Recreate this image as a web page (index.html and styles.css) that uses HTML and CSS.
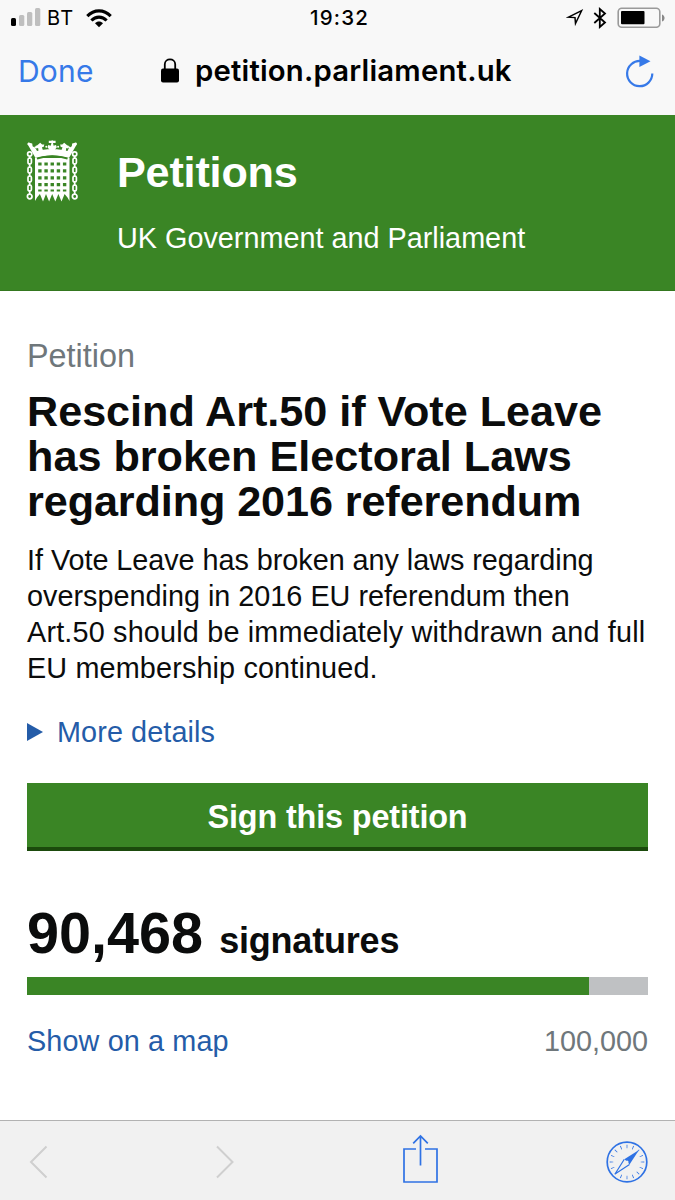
FILE: index.html
```html
<!DOCTYPE html>
<html lang="en">
<head>
<meta charset="utf-8">
<title>Petitions</title>
<link rel="stylesheet" href="styles.css">
</head>
<body>
<div class="screen">
  <div class="browser-top">
    <div class="status">
      <div class="status-left">
        <svg class="signal" width="32" height="20" viewBox="0 0 32 20"><rect x="1" y="10" width="5" height="8" rx="1.5" fill="#000"/><g fill="#bfbfbf"><rect x="9" y="7" width="5.3" height="11" rx="1.5"/><rect x="17" y="4" width="5.3" height="14" rx="1.5"/><rect x="25" y="0" width="5.3" height="18" rx="1.5"/></g></svg>
        <span class="carrier">BT</span>
        <svg class="wifi" width="26" height="19" viewBox="0 0 26 19" fill="none" stroke="#000" stroke-width="3.1"><path d="M1.3 7.1C8 .1 18 .1 24.7 7.1"/><path d="M5.4 11.5c4.4-4.5 10.8-4.5 15.2 0"/><path d="M13 18.3l-4-4c2.3-2.4 5.700-2.400 8 0z" fill="#000" stroke="none"/></svg>
      </div>
      <span class="clock">19:32</span>
      <div class="status-right">
        <svg width="18" height="18" viewBox="0 0 18 18" fill="none" stroke="#000" stroke-width="1.5"><path d="M2.500 8.200L15.600 1.700 9.500 14.500 9 8.600z"/></svg>
        <svg class="bt" width="14" height="22" viewBox="0 0 14 22" fill="none" stroke="#000" stroke-width="1.8"><path d="M1.300 6L12 15.500 6.800 20V2L12 6.500 1.300 16"/></svg>
        <svg class="battery" width="49" height="22" viewBox="0 0 49 22"><rect x="1.200" y="1.200" width="41.600" height="19" rx="3.500" fill="none" stroke="#9a9a9a" stroke-width="1.600"/><rect x="4" y="4" width="23.500" height="13.200" rx="1" fill="#000"/><path d="M45 7.400c3.400 1 3.400 6 0 7z" fill="#888"/></svg>
      </div>
    </div>
    <div class="address">
      <span class="done">Done</span>
      <svg class="lock" width="20" height="26" viewBox="0 0 20 26"><rect x="1" y="10.400" width="18" height="14.200" rx="2" fill="#000"/><path d="M4.800 12V6.200C4.800-.2 15.200-.2 15.200 6.200V12" fill="none" stroke="#000" stroke-width="1.800"/></svg>
      <span class="url">petition.parliament.uk</span>
      <svg class="reload" width="30" height="34" viewBox="0 0 30 34"><path d="M15.500 7A12.600 12.600 0 1 0 27.300 19.600" fill="none" stroke="#3679e8" stroke-width="2.200"/><path d="M14.400 1.500L25.500 7.200 14.400 13z" fill="#3679e8"/></svg>
    </div>
  </div>
  <header class="banner">
    <svg class="crest" width="54" height="64" viewBox="0 0 54 64">
      <g fill="none" stroke="#fff" stroke-width="1.700">
        <g id="chain"><circle cx="3.700" cy="14" r="2.100"/><rect x="2" y="18" width="3.400" height="6" rx="1.600"/><rect x="2" y="27" width="3.400" height="6" rx="1.600"/><rect x="2" y="36" width="3.400" height="6" rx="1.600"/><rect x="2" y="45" width="3.400" height="6" rx="1.600"/><path d="M3.700 16v3M3.700 23v5M3.700 32v5M3.700 41v5M3.700 50v4"/><circle cx="3.700" cy="56.500" r="2.300"/></g>
        <use href="#chain" x="45"/>
      </g>
      <path d="M9 18H43.500V61L41.500 57.500 38.600 54 35.500 61.500 32.400 54 29.300 61.500 26.200 54 23.100 61.500 20 54 17 61.500 13.900 54 11 57.500 9 61z" fill="#fff"/>
      <g stroke="#3a8525" stroke-width="3.200" stroke-dasharray="3.400 2.780" fill="none">
        <path d="M12.200 24H41M12.200 30.900H41M12.200 37.800H41M12.200 44.700H41"/>
        <path d="M12.200 50.500H41" stroke-width="2"/>
      </g>
      <path d="M9.500 18L2.300 5.500C0 4 2.500 1.200 4.200 3L6.200 3.500 6.600 6.200C9 7.500 10.400 9.200 11 11 17 8.600 35.500 8.600 41.500 11 42 9.200 43.400 7.500 45.800 6.200L46.200 3.500 48.200 3C50 1.200 52.400 4 50.100 5.500L43 18C35 14.500 17.500 14.500 9.500 18z" fill="#fff"/>
      <path d="M11 18.700C20 15.200 32.500 15.200 41.500 18.700" fill="none" stroke="#3a8525" stroke-width="1.600"/>
      <g fill="#fff">
        <path d="M25.500 3.100H22.800V.8h2.300L26.200.2l1.100.6h2.300v2.300H27l.6 2.700 2.400-.7.800 2.100-2.300 3h-4.700l-2.300-3 .8-2.100 2.400.7z"/>
        <path id="fleur" d="M14.200 2.800l1.900 1.600 2.200.2-.7 2.400-1.700.2 1.200 3.500-4.400 1-.6-3.700-1.900.4-.9-2.300 2-.9z"/>
        <use href="#fleur" transform="matrix(-1 0 0 1 52.400 0)"/>
        <circle cx="20.300" cy="6.800" r="1"/><circle cx="32.100" cy="6.800" r="1"/><circle cx="9.200" cy="7.500" r=".9"/><circle cx="43.200" cy="7.500" r=".9"/>
      </g>
    </svg>
    <div>
      <div class="brand">Petitions</div>
      <div class="tagline">UK Government and Parliament</div>
    </div>
  </header>
  <main class="content">
    <div class="kicker">Petition</div>
    <h1><span class="t1">Rescind Art.50 if Vote Leave</span><br><span>has broken Electoral Laws</span><br><span class="t3">regarding 2016 referendum</span></h1>
    <p class="summary"><span class="s1">If Vote Leave has broken any laws regarding</span><br><span>overspending in 2016 EU referendum then</span><br><span class="s3">Art.50 should be immediately withdrawn and full</span><br><span class="s4">EU membership continued.</span></p>
    <div class="details"><svg width="16" height="18" viewBox="0 0 16 18"><path d="M0 0L16 9 0 18z" fill="#245ca8"/></svg><span>More details</span></div>
    <div class="sign"><span>Sign this petition</span></div>
    <div class="count"><span class="number">90,468</span><span class="unit">signatures</span></div>
    <div class="bar"><div class="bar-fill" style="width:90.468%"></div></div>
    <div class="foot"><span class="map">Show on a map</span><span class="goal">100,000</span></div>
  </main>
  <nav class="toolbar">
    <svg width="20" height="34" viewBox="0 0 20 34" fill="none" stroke="#cfcfcf" stroke-width="2"><path d="M17.500 1.500L2 17l15.500 15.500"/></svg>
    <svg class="fwd" width="20" height="34" viewBox="0 0 20 34" fill="none" stroke="#cfcfcf" stroke-width="2"><path d="M2 1.500L17.500 17 2 32.500"/></svg>
    <svg class="share" width="36" height="50" viewBox="0 0 36 50" fill="none" stroke="#2f72e4" stroke-width="1.700"><path d="M13 15H1V48H34V15H22M17.500 31.500V2M10.200 9.300L17.500 2l7.300 7.300"/></svg>
    <svg class="compass" width="42" height="42" viewBox="0 0 42 42"><circle cx="21" cy="21" r="19.800" fill="none" stroke="#2f72e4" stroke-width="1.700"/><circle cx="21" cy="21" r="15.500" fill="none" stroke="#2f72e4" stroke-width="3.600" pathLength="160" stroke-dasharray="1.300 8.700" stroke-dashoffset="0.650"/><path d="M33 9L9 33l9.300-14.800z" fill="#f0f0f0"/><path d="M33 9L18.300 18.200 23.500 23.500z" fill="#2f72e4"/><path d="M18.300 18.200L9 33l14.500-9.500" fill="#f0f0f0" stroke="#2f72e4" stroke-width="1.200"/><circle cx="21" cy="21" r="1.600" fill="#f0f0f0"/></svg>
  </nav>
</div>
</body>
</html>
```
FILE: styles.css
```css
* { box-sizing: border-box; }
body { margin: 0; background: #fff; color: #0b0c0c; font-family: "Liberation Sans", Arial, sans-serif; font-size: 28.8px; line-height: 36px; }
svg { display: block; flex: none; }
span { white-space: nowrap; }
.screen { width: 675px; height: 1200px; display: flex; flex-direction: column; overflow: hidden; }
.browser-top { height: 115px; background: #f8f8f8; color: #000; font-family: Inter, sans-serif; flex: none; }
.status { height: 36px; display: grid; grid-template-columns: 1fr auto 1fr; align-items: center; font-size: 20px; line-height: 24px; }
.status-left { display: flex; align-items: center; padding-left: 10px; }
.carrier { margin-left: 5px; letter-spacing: 1.400px; }
.wifi { margin-left: 11px; }
.clock { font-weight: 500; font-size: 20.500px; letter-spacing: 1.200px; padding-left: 4px; }
.status-right { display: flex; align-items: center; justify-content: flex-end; padding-right: 9px; }
.bt { margin-left: 9px; }
.battery { margin-left: 10px; }
.address { height: 70px; display: flex; align-items: center; padding: 0 20px 0 18px; font-size: 30px; }
.done { color: #3679e8; width: 142px; letter-spacing: .2px; }
.url { font-weight: 600; margin-left: 15px; font-size: 29.300px; letter-spacing: .2px; }
.reload { margin-left: auto; }
.banner { height: 176px; flex: none; background: #3a8525; color: #fff; display: flex; padding: 25px 26px 0; box-shadow: inset 0 -1px #34771f; }
.banner > div { margin-left: 37px; padding-top: 10px; }
.brand { font-size: 43.200px; line-height: 45px; font-weight: bold; letter-spacing: -.2px; }
.tagline { margin-top: 25px; }
.content { padding: 47px 27px 0; flex: 1; }
.kicker { color: #6f777b; font-size: 32.400px; }
h1 { margin: 15px 0 0; font-size: 43.200px; line-height: 45px; }
.t1 { letter-spacing: -.04px; }
.t3 { letter-spacing: -.1px; }
.summary { margin: 18px 0 0; }
.s1 { letter-spacing: -.04px; }
.s3 { letter-spacing: .18px; }
.s4 { letter-spacing: .14px; }
.details { display: flex; align-items: center; gap: 14px; margin-top: 28px; color: #245ca8; letter-spacing: .1px; }
.sign { margin-top: 33px; height: 68px; padding-top: 16px; background: #3a8525; border-bottom: 4px solid #1b4a0c; text-align: center; color: #fff; font-weight: bold; font-size: 32.400px; letter-spacing: -.15px; }
.count { margin-top: 52px; height: 60px; display: flex; align-items: baseline; line-height: 60px; font-weight: bold; }
.number { font-size: 57.600px; }
.unit { font-size: 36px; margin-left: 16px; letter-spacing: -.2px; }
.bar { height: 18px; margin-top: 14px; background: #bfc1c3; }
.bar-fill { height: 18px; background: #3a8525; }
.foot { display: flex; justify-content: space-between; margin-top: 28px; }
.map { color: #245ca8; letter-spacing: .12px; }
.goal { color: #6f777b; }
.toolbar { height: 80px; flex: none; background: #f1f1f1; border-top: 1px solid #b2b2b2; display: flex; align-items: center; padding: 3px 27px 0 29px; }
.fwd { margin-left: 166px; }
.share { margin: -6px 0 0 168px; }
.compass { margin-left: auto; }
```
